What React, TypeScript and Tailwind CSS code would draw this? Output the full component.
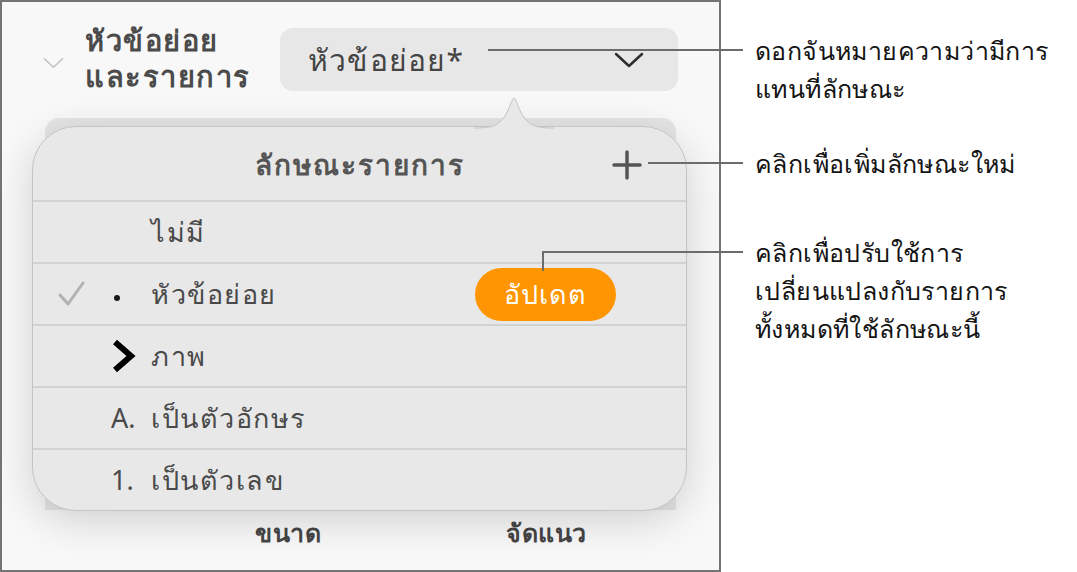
import type { ReactNode } from 'react'

type Lead = 'none' | 'bullet' | 'image' | 'letter' | 'number'

interface StyleRow {
  label: string
  lead: Lead
  checked?: boolean
  update?: boolean
}

const rows: StyleRow[] = [
  { label: 'ไม่มี', lead: 'none' },
  { label: 'หัวข้อย่อย', lead: 'bullet', checked: true, update: true },
  { label: 'ภาพ', lead: 'image' },
  { label: 'เป็นตัวอักษร', lead: 'letter' },
  { label: 'เป็นตัวเลข', lead: 'number' },
]

function ChevronDown({ className = '', width = 2.5 }: { className?: string; width?: number }) {
  return (
    <svg viewBox="0 0 30 16" className={className} fill="none" stroke="currentColor" strokeWidth={width} strokeLinecap="round" strokeLinejoin="round">
      <path d="M2 2l13 12L28 2" />
    </svg>
  )
}

function LeadMarker({ lead }: { lead: Lead }) {
  if (lead === 'bullet') return <span className="ml-[3px] block w-[6px] h-[6px] rounded-full bg-[#1a1a1a] mt-[8px]" />
  if (lead === 'image')
    return (
      <svg viewBox="0 0 26 34" className="w-[26px] h-[34px] text-black" fill="none" stroke="currentColor" strokeWidth={6} strokeLinejoin="miter">
        <path d="M4 3l16 14L4 31" />
      </svg>
    )
  if (lead === 'letter') return <span className="tracking-normal">A.</span>
  if (lead === 'number') return <span className="tracking-normal">1.</span>
  return null
}

function Callout({ children, className = '' }: { children: ReactNode; className?: string }) {
  return <p className={`text-[25px] leading-[38px] tracking-[0.4px] text-[#141414] ${className}`}>{children}</p>
}

function StylesPopover() {
  return (
    <div className="absolute left-[30px] top-[124px] w-[655px] h-[385px] rounded-[44px] bg-[#e8e8e8] border border-[#c4c4c4] shadow-[0_10px_40px_rgba(0,0,0,0.16)]">
      {/* pointer toward the style dropdown */}
      <svg viewBox="0 0 80 32" className="absolute left-[441px] top-[-30px] w-[80px] h-[32px]">
        <path d="M0 31 C18 31 24 29 31 19 C36 11 38 1 40 1 C42 1 44 11 49 19 C56 29 62 31 80 31 L80 32 L0 32 Z" fill="#e8e8e8" />
        <path d="M0 31 C18 31 24 29 31 19 C36 11 38 1 40 1 C42 1 44 11 49 19 C56 29 62 31 80 31" fill="none" stroke="#c4c4c4" strokeWidth={1} />
      </svg>

      <div className="relative h-[73px] flex items-center justify-center">
        <span className="text-[28px] font-bold tracking-[2px] text-[#555]">ลักษณะรายการ</span>
        <svg viewBox="0 0 32 32" className="absolute left-[578px] top-[22px] w-[32px] h-[32px] text-[#555]" fill="none" stroke="currentColor" strokeWidth={3.5} strokeLinecap="round">
          <path d="M16 3v26M3 16h26" />
        </svg>
      </div>

      {rows.map((row) => (
        <div key={row.label} className="h-[62px] border-t-2 border-[#d2d2d2] flex items-center pl-[24px] text-[27px] text-[#4a4a4a]">
          <span className="w-[28px] flex justify-center">
            {row.checked && (
              <svg viewBox="0 0 28 28" className="w-[28px] h-[28px] text-[#b2b2b2]" fill="none" stroke="currentColor" strokeWidth={3} strokeLinecap="round" strokeLinejoin="round">
                <path d="M3 15l8 9L26 3" />
              </svg>
            )}
          </span>
          <span className="ml-[26px] w-[40px] flex items-center">
            <LeadMarker lead={row.lead} />
          </span>
          <span className="tracking-[1.5px]">{row.label}</span>
          {row.update && (
            <button className="ml-auto mr-[70px] w-[141px] h-[53px] rounded-full bg-[#ff9500] text-white text-[27px] tracking-[1px] flex items-center justify-center">
              อัปเดต
            </button>
          )}
        </div>
      ))}
    </div>
  )
}

export default function App() {
  return (
    <div className="relative w-[1077px] h-[572px] bg-white flex font-['Noto_Sans',sans-serif]">
      {/* inspector panel */}
      <div className="relative w-[721px] h-[572px] border-2 border-[#747474] bg-[#f8f8f8] overflow-hidden flex flex-col">
        <div className="flex items-start pt-[20px]">
          <ChevronDown className="ml-[41px] mt-[35px] w-[21px] h-[12px] text-[#bdbdbd]" width={2} />
          <h2 className="ml-[21px] text-[29px] leading-[36px] tracking-[1.5px] font-bold text-[#4b4b4b]">
            หัวข้อย่อย
            <br />
            และรายการ
          </h2>
          <div className="ml-auto mr-[41px] mt-[6px] w-[398px] h-[63px] rounded-[13px] bg-[#e7e7e7] flex items-center pl-[28px] pr-[34px]">
            <span className="text-[30px] tracking-[1.2px] text-[#444]">หัวข้อย่อย*</span>
            <ChevronDown className="ml-auto w-[30px] h-[16px] text-[#2e2e2e]" />
          </div>
        </div>

        <div className="mx-[43px] mt-[24px] h-[392px] rounded-t-[14px] bg-[#e5e5e5]" />

        <div className="mt-[4px] flex text-[25px] font-bold tracking-[0.5px] text-[#454545]">
          <span className="ml-[253px]">ขนาด</span>
          <span className="ml-[185px]">จัดแนว</span>
        </div>

        <StylesPopover />
      </div>

      {/* callout notes */}
      <div className="ml-[34px] pt-[31px] flex flex-col">
        <Callout>
          ดอกจันหมายความว่ามีการ
          <br />
          แทนที่ลักษณะ
        </Callout>
        <Callout className="mt-[37px]">คลิกเพื่อเพิ่มลักษณะใหม่</Callout>
        <Callout className="mt-[51px]">
          คลิกเพื่อปรับใช้การ
          <br />
          เปลี่ยนแปลงกับรายการ
          <br />
          ทั้งหมดที่ใช้ลักษณะนี้
        </Callout>
      </div>

      {/* leader lines */}
      <div className="absolute left-[488px] top-[49px] w-[255px] h-[2px] bg-[#6c6c6c]" />
      <div className="absolute left-[648px] top-[162px] w-[95px] h-[2px] bg-[#6c6c6c]" />
      <div className="absolute left-[542px] top-[251px] w-[201px] h-[2px] bg-[#6c6c6c]" />
      <div className="absolute left-[542px] top-[251px] w-[2px] h-[20px] bg-[#6c6c6c]" />
    </div>
  )
}
